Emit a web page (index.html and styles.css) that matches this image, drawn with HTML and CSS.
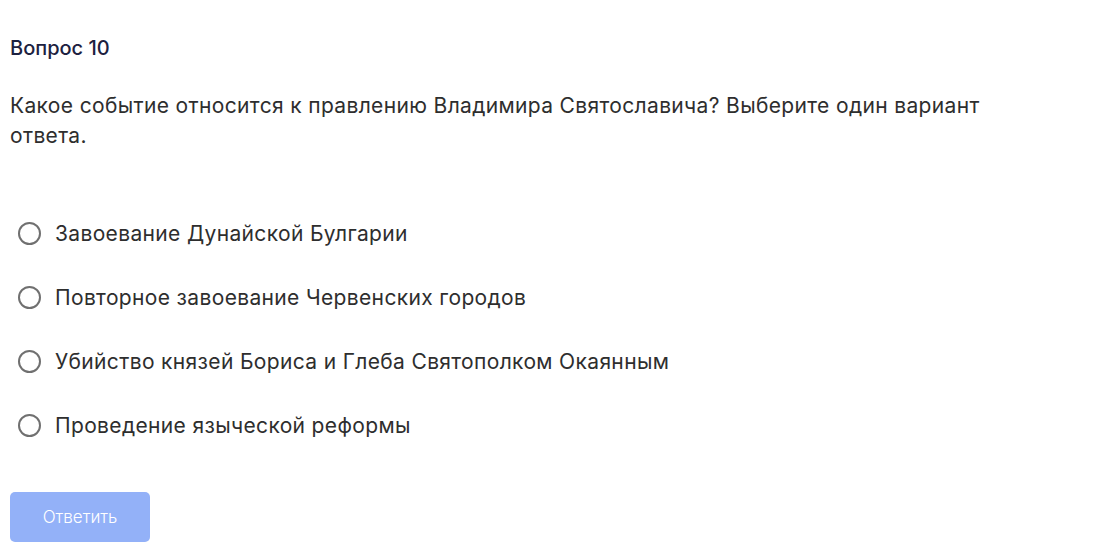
FILE: index.html
```html
<!DOCTYPE html>
<html>
<head>
    <title>Вопрос 10</title>
    <link rel="stylesheet" href="styles.css">
</head>
<body>
    <div class="quiz">
        <div class="quiz-number">Вопрос 10</div>
        <div class="quiz-question">Какое событие относится к правлению Владимира Святославича? Выберите один вариант ответа.</div>

        <div class="answers">
            <label class="answer">
                <input type="radio" name="answer">
                <span class="radio"></span>
                <span class="answer-text">Завоевание Дунайской Булгарии</span>
            </label>
            <label class="answer">
                <input type="radio" name="answer">
                <span class="radio"></span>
                <span class="answer-text">Повторное завоевание Червенских городов</span>
            </label>
            <label class="answer">
                <input type="radio" name="answer">
                <span class="radio"></span>
                <span class="answer-text">Убийство князей Бориса и Глеба Святополком Окаянным</span>
            </label>
            <label class="answer">
                <input type="radio" name="answer">
                <span class="radio"></span>
                <span class="answer-text">Проведение языческой реформы</span>
            </label>
        </div>

        <button class="submit" disabled>Ответить</button>
    </div>
</body>
</html>
```

FILE: styles.css
```css
body {
    margin: 0;
    background-color: #ffffff;
    font-family: Inter, "Noto Sans", sans-serif;
    color: #2e2e2e;
}

.quiz {
    width: 1000px;
    padding: 35px 10px 0;
}

.quiz-number {
    font-size: 20px;
    font-weight: 500;
    line-height: 26px;
    color: #1c2140;
}

.quiz-question {
    margin-top: 30px;
    font-size: 21px;
    line-height: 30px;
    letter-spacing: 0.35px;
}

.answers {
    display: flex;
    flex-direction: column;
    gap: 34px;
    margin-top: 67px;
    padding-left: 8px;
}

.answer {
    display: flex;
    align-items: center;
    gap: 14px;
    height: 30px;
    cursor: pointer;
}

.answer input {
    display: none;
}

.radio {
    width: 19px;
    height: 19px;
    border: 2px solid #707070;
    border-radius: 50%;
    flex-shrink: 0;
}

.answer-text {
    font-size: 21px;
    letter-spacing: 0.35px;
}

.submit {
    margin-top: 52px;
    width: 140px;
    height: 50px;
    border: none;
    border-radius: 5px;
    background-color: #93b1f8;
    color: #ffffff;
    font-family: Inter, "Noto Sans", sans-serif;
    font-size: 17px;
    font-weight: 300;
    opacity: 1;
}
```
